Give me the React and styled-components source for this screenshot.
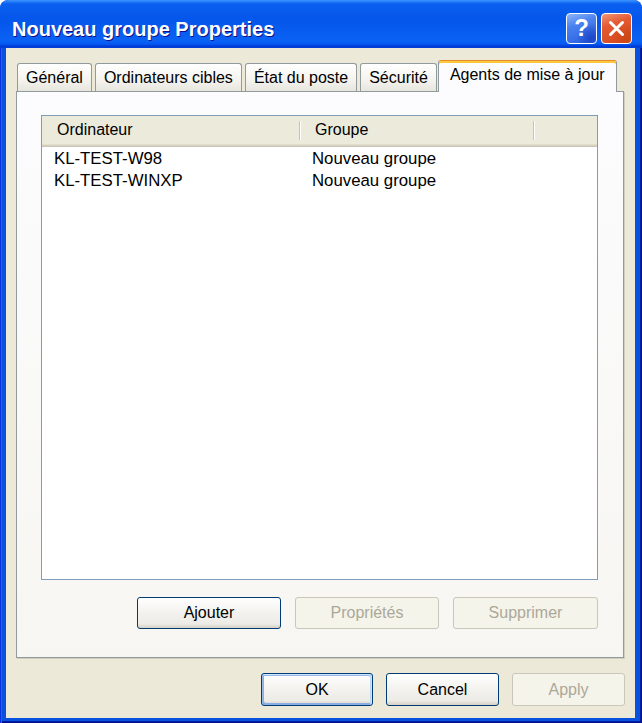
import React from "react";
import styled, { createGlobalStyle, css } from "styled-components";

const GlobalStyle = createGlobalStyle`
  html, body {
    margin: 0;
    padding: 0;
    background: #ffffff;
  }
  body {
    font-family: "Liberation Sans", Arial, sans-serif;
  }
`;

const Window = styled.div`
  width: 642px;
  height: 723px;
  display: flex;
  flex-direction: column;
  border-radius: 8px 8px 0 0;
  overflow: hidden;
  background: #0850de;
`;

const TitleBar = styled.div`
  flex: none;
  height: 48px;
  box-sizing: border-box;
  display: flex;
  align-items: center;
  padding: 8px 10px 0 12px;
  border-radius: 8px 8px 0 0;
  background: linear-gradient(
    180deg,
    #3d95ff 0%,
    #0a5ff0 8%,
    #0556ea 40%,
    #0a62f4 85%,
    #0558f2 92%,
    #003dd7 96%,
    #003dd7 100%
  );
`;

const Title = styled.div`
  flex: 1;
  margin-top: 3px;
  color: #ffffff;
  font: bold 20px "Liberation Sans", Arial, sans-serif;
  text-shadow: 1px 1px 0 #0f1089;
  white-space: nowrap;
`;

const TitleButtons = styled.div`
  display: flex;
  gap: 4px;
`;

const TitleButton = styled.div`
  width: 31px;
  height: 31px;
  box-sizing: border-box;
  border: 1px solid #ffffff;
  border-radius: 4px;
  display: flex;
  align-items: center;
  justify-content: center;
  color: #ffffff;
  font: bold 24px "Liberation Sans", Arial, sans-serif;
  ${(p) =>
    p.$close
      ? css`
          background: radial-gradient(
              circle at 85% 85%,
              #cc4614 0%,
              rgba(204, 70, 20, 0) 45%
            ),
            linear-gradient(160deg, #f09676 0%, #e35a33 35%, #d64a1e 100%);
        `
      : css`
          background: radial-gradient(
              circle at 85% 85%,
              #1c47c8 0%,
              rgba(28, 71, 200, 0) 45%
            ),
            linear-gradient(160deg, #8fb6fb 0%, #4a82f0 35%, #2a5ee0 100%);
        `}
`;

const Frame = styled.div`
  flex: 1;
  display: flex;
  padding: 0 7px 5px 6px;
  background: #0850de;
  box-shadow: inset 1px 0 #0831d9, inset 2px 0 #166aee, inset -1px -1px #00138c,
    inset -2px -2px #001ea0;
`;

const Body = styled.div`
  flex: 1;
  display: flex;
  flex-direction: column;
  padding: 12px 11px 0 10px;
  background: #ece9d8;
`;

const TabStrip = styled.div`
  position: relative;
  z-index: 1;
  height: 32px;
  margin-bottom: -1px;
  padding-left: 1px;
  display: flex;
  align-items: flex-end;
`;

const Tab = styled.div`
  box-sizing: border-box;
  display: flex;
  align-items: center;
  border: 1px solid #919b9c;
  border-bottom: none;
  border-radius: 3px 3px 0 0;
  font-size: 16px;
  color: #000000;
  white-space: nowrap;
  ${(p) =>
    p.$active
      ? css`
          height: 32px;
          margin-left: -2px;
          padding: 0 11px 4px;
          border-top: 1px solid #e68b2c;
          background: #fcfcfe;
          box-shadow: inset 0 2px #ffc73c;
        `
      : css`
          height: 28px;
          margin: 0 3px 1px 0;
          padding: 0 8px;
          background: linear-gradient(180deg, #ffffff 0%, #f4f3ee 60%, #e6e5de 100%);
        `}
`;

const Panel = styled.div`
  flex: 1;
  box-sizing: border-box;
  display: flex;
  flex-direction: column;
  padding: 23px 25px 28px 24px;
  border: 1px solid #919b9c;
  background: linear-gradient(180deg, #fcfcfe 0%, #f7f6f2 100%);
  box-shadow: 1px 1px 0 #d0cebf;
`;

const ListView = styled.div`
  flex: 1;
  display: flex;
  flex-direction: column;
  border: 1px solid #7f9db9;
  background: #ffffff;
  font-size: 16px;
  color: #000000;
`;

const Header = styled.div`
  height: 31px;
  box-sizing: border-box;
  display: flex;
  padding-bottom: 3px;
  background: #ebeadb;
  box-shadow: inset 0 -1px #cbc7b8, inset 0 -2px #d6d2c2, inset 0 -3px #e2decd;
`;

const HeaderCell = styled.div`
  position: relative;
  box-sizing: border-box;
  width: ${(p) => p.$width}px;
  display: flex;
  align-items: center;
  padding-left: 15px;
  &::after {
    content: "";
    position: absolute;
    right: 0;
    top: 5px;
    bottom: 4px;
    width: 1px;
    background: #c7c5b2;
    box-shadow: 1px 0 #ffffff;
  }
`;

const Rows = styled.div`
  padding-top: 1px;
`;

const Row = styled.div`
  height: 22px;
  display: flex;
  align-items: center;
  font-size: 16.8px;
`;

const Cell = styled.div`
  box-sizing: border-box;
  width: ${(p) => p.$width}px;
  padding-left: 12px;
  white-space: nowrap;
`;

const ButtonRow = styled.div`
  display: flex;
  justify-content: flex-end;
  gap: 14px;
  margin-top: 17px;
`;

const Footer = styled.div`
  display: flex;
  justify-content: flex-end;
  gap: 13px;
  padding: 15px 0 12px;
  margin-right: -1px;
`;

const Button = styled.button`
  box-sizing: border-box;
  width: ${(p) => p.$width}px;
  height: ${(p) => p.$height}px;
  padding: 0;
  font: 16px "Liberation Sans", Arial, sans-serif;
  color: #000000;
  border: 1px solid #003c74;
  border-radius: 3px;
  background: linear-gradient(180deg, #ffffff 0%, #f3f2ee 50%, #ecebe6 86%, #d6d0c5 100%);
  ${(p) =>
    p.$default &&
    css`
      box-shadow: inset -1px 1px #cee7ff, inset 1px 2px #98b8ea,
        inset -2px 2px #bcd4f6, inset 1px -1px #89ade4, inset 2px -2px #89ade4;
    `}
  &:disabled {
    color: #aca899;
    border-color: #c9c7ba;
    background: #f5f4ea;
  }
`;

const computers = [
  { name: "KL-TEST-W98", group: "Nouveau groupe" },
  { name: "KL-TEST-WINXP", group: "Nouveau groupe" },
];

const tabs = [
  "Général",
  "Ordinateurs cibles",
  "État du poste",
  "Sécurité",
  "Agents de mise à jour",
];

export default function App() {
  return (
    <>
      <GlobalStyle />
      <Window>
        <TitleBar>
          <Title>Nouveau groupe Properties</Title>
          <TitleButtons>
            <TitleButton>?</TitleButton>
            <TitleButton $close>
              <svg width="17" height="17" viewBox="0 0 17 17">
                <path
                  d="M2.5 2.5 L14.5 14.5 M14.5 2.5 L2.5 14.5"
                  stroke="#ffffff"
                  strokeWidth="3"
                  strokeLinecap="round"
                />
              </svg>
            </TitleButton>
          </TitleButtons>
        </TitleBar>
        <Frame>
          <Body>
            <TabStrip>
              {tabs.map((t, i) => (
                <Tab key={t} $active={i === tabs.length - 1}>
                  {t}
                </Tab>
              ))}
            </TabStrip>
            <Panel>
              <ListView>
                <Header>
                  <HeaderCell $width={258}>Ordinateur</HeaderCell>
                  <HeaderCell $width={234}>Groupe</HeaderCell>
                </Header>
                <Rows>
                  {computers.map((c) => (
                    <Row key={c.name}>
                      <Cell $width={258}>{c.name}</Cell>
                      <Cell $width={234}>{c.group}</Cell>
                    </Row>
                  ))}
                </Rows>
              </ListView>
              <ButtonRow>
                <Button $width={144} $height={32}>
                  Ajouter
                </Button>
                <Button $width={144} $height={32} disabled>
                  Propriétés
                </Button>
                <Button $width={145} $height={32} disabled>
                  Supprimer
                </Button>
              </ButtonRow>
            </Panel>
            <Footer>
              <Button $width={112} $height={33} $default>
                OK
              </Button>
              <Button $width={113} $height={33}>
                Cancel
              </Button>
              <Button $width={113} $height={33} disabled>
                Apply
              </Button>
            </Footer>
          </Body>
        </Frame>
      </Window>
    </>
  );
}
